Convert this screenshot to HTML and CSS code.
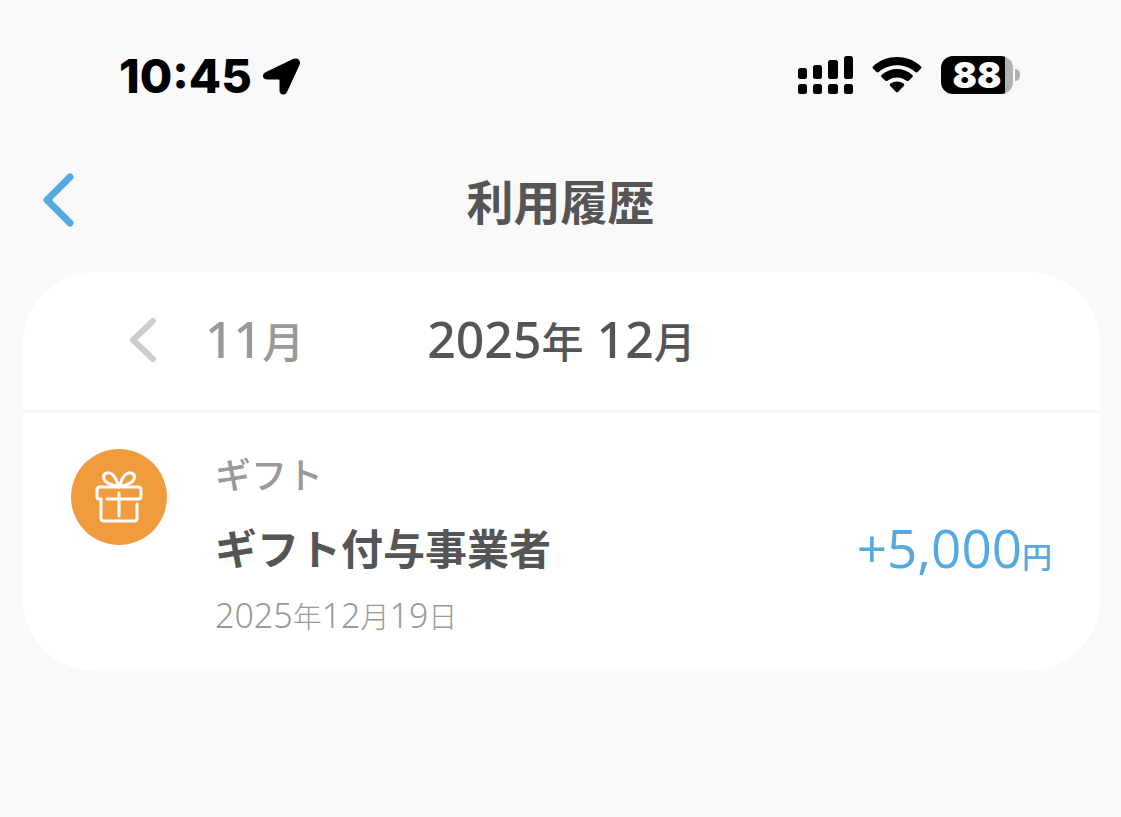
FILE: index.html
```html
<!DOCTYPE html>
<html lang="ja">
  <head>
    <meta charset="utf-8" />
    <title>利用履歴</title>
    <meta name="viewport" content="width=device-width, initial-scale=1.0" />
    <link rel="stylesheet" href="styles.css">
  </head>
  <body>
    <!-- Status bar -->
    <div class="status-bar">
      <div class="status-left">
        <span class="time">10:45</span>
        <svg class="location-icon" width="38" height="38" viewBox="0 0 38 38">
          <path
            d="M3 15L30 2C34.500 0 38.500 3.500 36.500 8L24 35C22 39.200 16.500 38 16.500 33.500V23.500Q16.500 22.500 15.500 22.500H4.500C-.8 22.500-1.800 17.300 3 15Z"
          />
        </svg>
      </div>
      <div class="status-right">
        <svg width="55" height="38" viewBox="0 0 55 38">
          <rect x="0" y="12" width="9" height="11" rx="2.500" />
          <rect x="15" y="9" width="9" height="14" rx="2.500" />
          <rect x="30" y="4" width="10" height="19" rx="2.500" />
          <rect x="46" y="0" width="9" height="23" rx="2.500" />
          <rect x="0" y="28" width="9" height="10" rx="2.500" />
          <rect x="15" y="28" width="9" height="10" rx="2.500" />
          <rect x="30" y="28" width="10" height="10" rx="2.500" />
          <rect x="46" y="28" width="9" height="10" rx="2.500" />
        </svg>
        <svg width="50" height="38" viewBox="0 0 50 38">
          <path
            d="M1 12.500Q0 11.300 1.200 10.200C14.500-2 35.500-2 48.800 10.200Q50 11.300 49 12.500L45.500 16Q44.400 17 43 15.700C33 7 17 7 7 15.700Q5.600 17 4.500 16Z"
          />
          <path
            d="M9.500 21Q8.500 19.900 9.800 18.700C18.500 11 31.500 11 40.200 18.700Q41.500 19.900 40.500 21L36.800 24.600Q35.500 25.600 34.100 24.600C29 20.500 21 20.500 15.900 24.600Q14.500 25.600 13.200 24.600Z"
          />
          <path
            d="M18 29.700Q17.200 28.500 18.500 27.500C22.500 24.700 27.500 24.700 31.500 27.500Q32.800 28.500 32 29.700L26 36Q25 36.800 24 36Z"
          />
        </svg>
        <div class="battery">
          <span class="battery-body">88</span>
          <span class="battery-cap"></span>
        </div>
      </div>
    </div>

    <!-- Page header -->
    <header class="header">
      <button class="back-button" type="button" aria-label="戻る">
        <svg width="32" height="54" viewBox="0 0 32 54" fill="none">
          <path
            d="M27 4L4 27L27 50"
            stroke="#54aae0"
            stroke-width="7"
            stroke-linecap="round"
            stroke-linejoin="round"
          />
        </svg>
      </button>
      <h1>利用履歴</h1>
    </header>

    <!-- History -->
    <main class="card">
      <div class="month-nav">
        <button class="prev-month" type="button">
          <svg width="28" height="46" viewBox="0 0 28 46" fill="none">
            <path
              d="M24 4L4 23L24 42"
              stroke="#ccc"
              stroke-width="6"
              stroke-linecap="round"
              stroke-linejoin="round"
            />
          </svg>
          <span><span class="num">11</span>月</span>
        </button>
        <h2><span class="num">2025</span>年<span class="num"> 12</span>月</h2>
      </div>

      <ul class="history">
        <li class="history-item">
          <div class="gift-icon">
            <svg
              width="48"
              height="52"
              viewBox="0 0 48 52"
              fill="none"
              stroke="#fff"
              stroke-width="3"
              stroke-linecap="round"
              stroke-linejoin="round"
            >
              <path d="M24 16C20 14 11 14 9 8C7 2 14 0 18 4C22 8 22 12 24 16Z" />
              <path d="M24 16C28 14 37 14 39 8C41 2 34 0 30 4C26 8 26 12 24 16Z" />
              <path
                d="M6 28H4Q2 28 2 26V19Q2 16 5 16H43Q46 16 46 19V25Q46 28 43 28H12"
              />
              <path d="M6 28V47Q6 50 9 50H39Q42 50 42 47V33" />
              <path d="M24 22V45" />
            </svg>
          </div>
          <div class="detail">
            <p class="type">ギフト</p>
            <p class="name">ギフト付与事業者</p>
            <p class="date">
              <span class="num">2025</span>年<span class="num">12</span>月<span
                class="num"
                >19</span
              >日
            </p>
          </div>
          <p class="amount">+5,000<span class="yen">円</span></p>
        </li>
      </ul>
    </main>
  </body>
</html>
```

FILE: styles.css
```css
body {
  margin: 0;
  background-color: #f9f9f9;
  color: #555;
  font-family: "Noto Sans CJK JP", sans-serif;
}
h1,
h2,
p {
  margin: 0;
}
button {
  background: none;
  border: none;
  padding: 0;
  color: inherit;
  font: inherit;
  cursor: pointer;
}
svg {
  display: block;
}
.num {
  font-family: "Noto Sans", sans-serif;
}

/* Status bar */
.status-bar {
  display: flex;
  justify-content: space-between;
  align-items: center;
  padding: 45px 101px 0 119px;
  height: 60px;
  color: #000;
  font-family: Inter, sans-serif;
}
.status-left {
  display: flex;
  align-items: center;
  gap: 11px;
  padding-top: 2px;
}
.time {
  font-size: 47px;
  font-weight: 800;
  line-height: 60px;
}
.status-right {
  display: flex;
  align-items: center;
  gap: 19px;
}
.battery {
  display: flex;
  align-items: center;
  gap: 2px;
}
.battery-body {
  width: 72px;
  height: 38px;
  border-radius: 12px;
  background: linear-gradient(to right, #000 64px, #b0b0b0 64px);
  color: #fff;
  font-size: 36px;
  font-weight: 900;
  line-height: 38px;
  text-align: center;
}
.battery-cap {
  width: 5px;
  height: 12px;
  border-radius: 0 6px 6px 0;
  background-color: #b0b0b0;
}

/* Page header */
.header {
  display: grid;
  grid-template-columns: 1fr auto 1fr;
  align-items: center;
  padding: 61px 43px 38px;
}
.back-button {
  justify-self: start;
}
h1 {
  font-size: 47px;
  font-weight: 700;
  line-height: 68px;
}

/* History */
.card {
  margin: 0 21px 0 23px;
  border-radius: 72px;
  background-color: #fff;
}
.month-nav {
  display: grid;
  grid-template-columns: 1fr auto 1fr;
  align-items: center;
  padding: 34px 48px 37px;
  border-bottom: 3px solid #f7f7f7;
  font-size: 42px;
  font-weight: 500;
  line-height: 66px;
}
.month-nav .num {
  font-size: 50px;
}
.prev-month {
  display: flex;
  align-items: center;
  gap: 48px;
  padding-left: 58px;
  color: #999;
}
h2 {
  font-size: 42px;
  font-weight: 500;
}
.history {
  list-style: none;
  margin: 0;
  padding: 0;
}
.history-item {
  display: flex;
  gap: 48px;
  padding: 36px 48px;
}
.gift-icon {
  display: flex;
  align-items: center;
  justify-content: center;
  width: 96px;
  height: 96px;
  border-radius: 50%;
  background-color: #f19b3f;
}
.detail {
  flex: 1;
}
.type {
  color: #999;
  font-size: 36px;
  font-weight: 500;
  line-height: 48px;
}
.name {
  margin: 20px 0 18px;
  font-size: 42px;
  font-weight: 700;
  line-height: 60px;
}
.date {
  color: #999;
  font-size: 29px;
  font-weight: 300;
  line-height: 40px;
}
.date .num {
  font-size: 34px;
}
.amount {
  align-self: center;
  margin-top: 20px;
  color: #54aae0;
  font-family: "Open Sans", "Noto Sans CJK JP", sans-serif;
  font-size: 53px;
  font-weight: 400;
  line-height: 72px;
}
.yen {
  font-size: 30px;
  font-weight: 500;
}
```
